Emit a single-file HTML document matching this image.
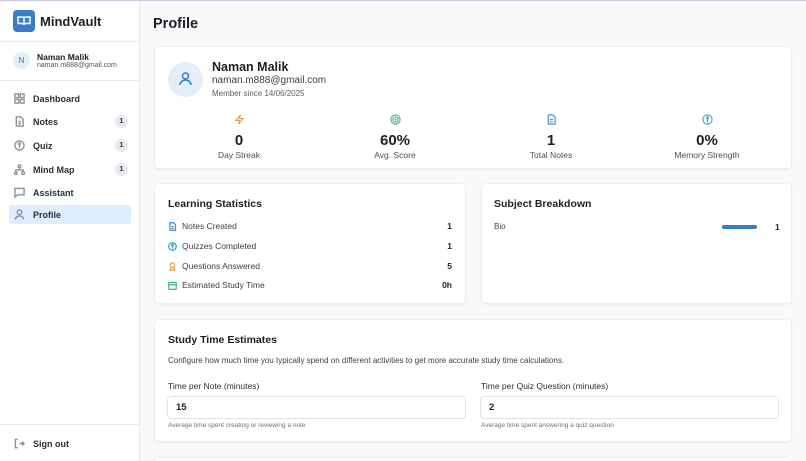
<!DOCTYPE html>
<html style="width:806px;height:461px;overflow:hidden"><head><meta charset="utf-8"><style>
*{box-sizing:border-box;margin:0;padding:0}
body{width:806px;height:461px;overflow:hidden;font-family:"Liberation Sans",sans-serif;background:#f8f9fb;color:#1c1f24;position:relative;border-top:1px solid #c9c6dd}
.abs{position:absolute}
.sb{left:0;top:0;width:140px;height:461px;background:#fff;border-right:1px solid #e6e8ec}
.hr{position:absolute;left:0;width:140px;height:1px;background:#e8eaee}
.nav{position:absolute;left:9px;width:122px;height:19px;display:flex;align-items:center;font-size:9px;color:#2a2f36;font-weight:bold;padding-left:5px}
.nav svg{width:11px;height:11px;margin-right:8px;stroke:#8a9099;fill:none;stroke-width:1.5}
.badge{position:absolute;right:3px;top:3px;width:13px;height:13px;border-radius:50%;background:#e6e9ee;font-size:7px;text-align:center;line-height:13px;color:#333}
.card{position:absolute;background:#fff;border:1px solid #eceef1;border-radius:5px;box-shadow:0 1px 2px rgba(0,0,0,.05)}
.stat{position:absolute;width:156px;text-align:center}
.stat .v{font-size:15px;font-weight:bold;margin-top:2px}
.stat .l{font-size:8.5px;color:#4a5058;margin-top:1px}
.row{position:absolute;left:13px;right:13px;display:flex;align-items:center;font-size:8.5px;color:#3a3f46}
.row svg{width:9px;height:9px;margin-right:5px;fill:none;stroke-width:1.6}
.row b{margin-left:auto;color:#1c1f24}
.inp{position:absolute;height:23px;border:1px solid #dfe2e6;border-radius:4px;font-size:9.5px;padding-left:8px;line-height:21px;font-weight:bold;color:#222}
.lab{position:absolute;font-size:8.5px;color:#2a2f36}
.help{position:absolute;font-size:6.5px;color:#6b717a}
</style></head><body>
<div class="abs sb">
 <div class="abs" style="left:13px;top:9px;width:22px;height:22px;background:#3a7dc2;border-radius:4px">
  <svg width="22" height="22" viewBox="0 0 22 22"><path d="M5 7h4.5a1.5 1.5 0 0 1 1.5 1.5V15a1.5 1.5 0 0 0-1.5-1.5H5zM17 7h-4.5A1.5 1.5 0 0 0 11 8.5V15a1.5 1.5 0 0 1 1.5-1.5H17z" fill="none" stroke="#fff" stroke-width="1.4"/></svg></div>
 <div class="abs" style="left:40px;top:13px;font-size:13px;font-weight:bold">MindVault</div>
 <div class="hr" style="top:40px"></div>
 <div class="abs" style="left:13px;top:51px;width:17px;height:17px;border-radius:50%;background:#e3eefb;font-size:8px;color:#3a6ea8;text-align:center;line-height:17px">N</div>
 <div class="abs" style="left:37px;top:51px;font-size:8.5px;font-weight:bold">Naman Malik</div>
 <div class="abs" style="left:37px;top:61px;font-size:7px;color:#555">naman.m888@gmail.com</div>
 <div class="hr" style="top:79px"></div>
 <div class="nav" style="top:88px"><svg viewBox="0 0 12 12"><rect x="1" y="1" width="4" height="4"/><rect x="7" y="1" width="4" height="4"/><rect x="1" y="7" width="4" height="4"/><rect x="7" y="7" width="4" height="4"/></svg>Dashboard</div>
 <div class="nav" style="top:111px"><svg viewBox="0 0 12 12"><path d="M2.5 1h5l2.5 2.5V11h-7.5zM4.5 6h3M4.5 8.5h3"/></svg>Notes<span class="badge">1</span></div>
 <div class="nav" style="top:135px"><svg viewBox="0 0 12 12"><circle cx="6" cy="6" r="5"/><path d="M6 3v6M4.5 5l1.5-2 1.5 2"/></svg>Quiz<span class="badge">1</span></div>
 <div class="nav" style="top:159px"><svg viewBox="0 0 12 12"><circle cx="6" cy="2.5" r="1.5"/><circle cx="2" cy="10" r="1.5"/><circle cx="10" cy="10" r="1.5"/><path d="M6 4v2.5M2 8.5V6.5h8v2"/></svg>Mind Map<span class="badge">1</span></div>
 <div class="nav" style="top:182px"><svg viewBox="0 0 12 12"><path d="M1 1.5h10v7H4L1 11z"/></svg>Assistant</div>
 <div class="nav" style="top:204px;background:#deeefd;border-radius:3px;font-weight:bold"><svg viewBox="0 0 12 12"><circle cx="6" cy="3.5" r="2.5"/><path d="M1.5 11.5a4.5 4 0 0 1 9 0"/></svg>Profile</div>
 <div class="hr" style="top:423px"></div>
 <div class="nav" style="top:433px;font-weight:bold"><svg viewBox="0 0 12 12"><path d="M4 1.5H1.5v9H4M6 6h5M9 4l2 2-2 2"/></svg>Sign out</div>
</div>

<div class="abs" style="left:153px;top:15px;font-size:14.5px;font-weight:bold">Profile</div>

<div class="card" style="left:154px;top:45px;width:638px;height:123px">
 <div class="abs" style="left:13px;top:15px;width:35px;height:35px;border-radius:50%;background:#e3eefb">
  <svg width="35" height="35" viewBox="0 0 35 35"><circle cx="17.5" cy="14" r="3" fill="none" stroke="#3a7dc2" stroke-width="1.5"/><path d="M12 23a5.5 5 0 0 1 11 0" fill="none" stroke="#3a7dc2" stroke-width="1.5"/></svg></div>
 <div class="abs" style="left:57px;top:13px;font-size:12.5px;font-weight:bold">Naman Malik</div>
 <div class="abs" style="left:57px;top:28px;font-size:10px;color:#3a3f46">naman.m888@gmail.com</div>
 <div class="abs" style="left:57px;top:42px;font-size:8px;color:#5a6068">Member since 14/06/2025</div>
 <div class="stat" style="left:6px;top:65px"><svg width="11" height="11" viewBox="0 0 12 12"><path d="M7 1L2 7h4l-1 4 5-6H6z" fill="none" stroke="#e9a040" stroke-width="1.2"/></svg><div class="v">0</div><div class="l">Day Streak</div></div>
 <div class="stat" style="left:162px;top:65px"><svg width="11" height="11" viewBox="0 0 12 12"><circle cx="6" cy="6" r="5" fill="none" stroke="#3fb27f" stroke-width="1.2"/><circle cx="6" cy="6" r="2.8" fill="none" stroke="#3fb27f" stroke-width="1.2"/><circle cx="6" cy="6" r="1" fill="#3fb27f"/></svg><div class="v">60%</div><div class="l">Avg. Score</div></div>
 <div class="stat" style="left:318px;top:65px"><svg width="11" height="11" viewBox="0 0 12 12"><path d="M2.5 1h5l2.5 2.5V11h-7.5zM4.5 6h3M4.5 8.5h3" fill="none" stroke="#3a8ad6" stroke-width="1.2"/></svg><div class="v">1</div><div class="l">Total Notes</div></div>
 <div class="stat" style="left:474px;top:65px"><svg width="11" height="11" viewBox="0 0 12 12"><circle cx="6" cy="6" r="5" fill="none" stroke="#2aa6c8" stroke-width="1.2"/><path d="M6 3v6M4.5 5l1.5-2 1.5 2" fill="none" stroke="#2aa6c8" stroke-width="1.2"/></svg><div class="v">0%</div><div class="l">Memory Strength</div></div>
</div>

<div class="card" style="left:154px;top:182px;width:312px;height:121px">
 <div class="abs" style="left:13px;top:14px;font-size:10.5px;font-weight:bold">Learning Statistics</div>
 <div class="row" style="top:37px"><svg viewBox="0 0 12 12" stroke="#3a8ad6"><path d="M2.5 1h5l2.5 2.5V11h-7.5zM4.5 6h3M4.5 8.5h3"/></svg>Notes Created<b>1</b></div>
 <div class="row" style="top:57px"><svg viewBox="0 0 12 12" stroke="#2aa6c8"><circle cx="6" cy="6" r="5"/><path d="M6 3v6M4.5 5l1.5-2 1.5 2"/></svg>Quizzes Completed<b>1</b></div>
 <div class="row" style="top:77px"><svg viewBox="0 0 12 12" stroke="#e9a040"><circle cx="6" cy="4" r="3"/><path d="M4 7l-1 4.5 3-1.5 3 1.5-1-4.5"/></svg>Questions Answered<b>5</b></div>
 <div class="row" style="top:96px"><svg viewBox="0 0 12 12" stroke="#3fb27f"><rect x="1" y="2" width="10" height="9" rx="1"/><path d="M1 5h10M4 1v2M8 1v2"/></svg>Estimated Study Time<b>0h</b></div>
</div>

<div class="card" style="left:481px;top:182px;width:311px;height:121px">
 <div class="abs" style="left:12px;top:14px;font-size:10.5px;font-weight:bold">Subject Breakdown</div>
 <div class="abs" style="left:12px;top:38px;font-size:8px;color:#3a3f46">Bio</div>
 <div class="abs" style="left:240px;top:41px;width:35px;height:4px;border-radius:2px;background:#3a7dc2"></div>
 <div class="abs" style="left:293px;top:38px;font-size:8.5px;font-weight:bold">1</div>
</div>

<div class="card" style="left:154px;top:318px;width:638px;height:123px">
 <div class="abs" style="left:13px;top:14px;font-size:10.5px;font-weight:bold">Study Time Estimates</div>
 <div class="abs" style="left:13px;top:36px;font-size:8px;color:#3a3f46">Configure how much time you typically spend on different activities to get more accurate study time calculations.</div>
 <div class="lab" style="left:13px;top:61px">Time per Note (minutes)</div>
 <div class="lab" style="left:326px;top:61px">Time per Quiz Question (minutes)</div>
 <div class="inp" style="left:12px;top:76px;width:299px">15</div>
 <div class="inp" style="left:325px;top:76px;width:299px">2</div>
 <div class="help" style="left:13px;top:102px">Average time spent creating or reviewing a note</div>
 <div class="help" style="left:326px;top:102px">Average time spent answering a quiz question</div>
</div>
<div class="card" style="left:154px;top:456px;width:638px;height:5px;border-bottom:none;border-radius:5px 5px 0 0"></div>
</body></html>
